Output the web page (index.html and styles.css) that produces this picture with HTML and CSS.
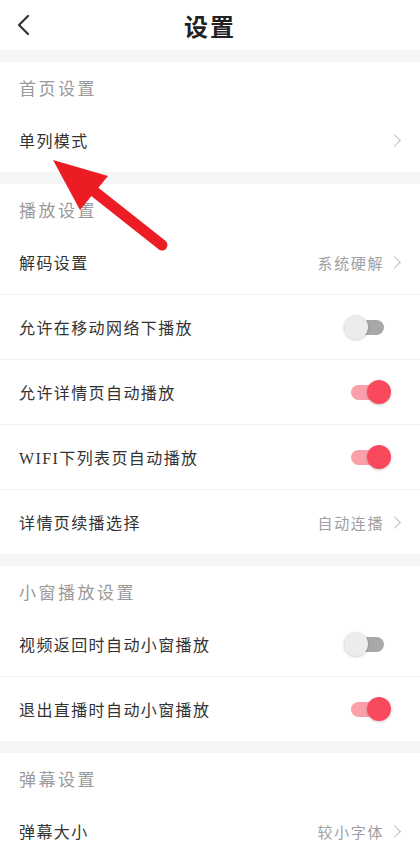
FILE: index.html
```html
<!DOCTYPE html>
<html lang="zh-CN">
<head>
    <meta charset="UTF-8">
    <meta name="viewport" content="width=device-width, initial-scale=1.0">
    <title>设置</title>
    <link rel="stylesheet" href="styles.css">
</head>
<body>
    <div class="page">
        <div class="topbar">
            <svg class="back" width="16" height="22" viewBox="0 0 16 22">
                <path d="M13 2 L4 11 L13 20" fill="none" stroke="#333" stroke-width="2.2" stroke-linecap="round" stroke-linejoin="round"/>
            </svg>
            <h1>设置</h1>
        </div>

        <div class="section">
            <div class="section-title">首页设置</div>
            <div class="row">
                <span class="label">单列模式</span>
                <span class="more"><span class="chev"></span></span>
            </div>
        </div>

        <div class="section">
            <div class="section-title">播放设置</div>
            <div class="row">
                <span class="label">解码设置</span>
                <span class="more">系统硬解<span class="chev"></span></span>
            </div>
            <div class="row">
                <span class="label">允许在移动网络下播放</span>
                <span class="switch"></span>
            </div>
            <div class="row">
                <span class="label">允许详情页自动播放</span>
                <span class="switch on"></span>
            </div>
            <div class="row">
                <span class="label">WIFI下列表页自动播放</span>
                <span class="switch on"></span>
            </div>
            <div class="row">
                <span class="label">详情页续播选择</span>
                <span class="more">自动连播<span class="chev"></span></span>
            </div>
        </div>

        <div class="section">
            <div class="section-title">小窗播放设置</div>
            <div class="row">
                <span class="label">视频返回时自动小窗播放</span>
                <span class="switch"></span>
            </div>
            <div class="row">
                <span class="label">退出直播时自动小窗播放</span>
                <span class="switch on"></span>
            </div>
        </div>

        <div class="section">
            <div class="section-title">弹幕设置</div>
            <div class="row">
                <span class="label">弹幕大小</span>
                <span class="more">较小字体<span class="chev"></span></span>
            </div>
        </div>

        <!-- arrow drawn over the page -->
        <svg class="arrow" width="420" height="860" viewBox="0 0 420 860">
            <line x1="162" y1="245" x2="95" y2="192" stroke="#ec1c24" stroke-width="11" stroke-linecap="round"/>
            <polygon points="53,160 108,176 80,210" fill="#ec1c24"/>
        </svg>
    </div>
</body>
</html>
```

FILE: styles.css
```css
body {
    margin: 0;
    background-color: #f5f5f5;
    font-family: "Liberation Serif", "Noto Sans CJK SC", sans-serif;
}
.page {
    position: relative;
    width: 420px;
    min-height: 860px;
    overflow: hidden;
}
.topbar {
    position: relative;
    height: 50px;
    background: #fff;
    display: flex;
    align-items: center;
    justify-content: center;
    margin-bottom: 12px;
}
.topbar h1 {
    margin: 0;
    font-family: "Noto Sans CJK SC", sans-serif;
    font-size: 24px;
    font-weight: bold;
    color: #222;
    letter-spacing: 2px;
}
.back {
    position: absolute;
    left: 15px;
    top: 14px;
}
.section {
    background: #fff;
    margin-bottom: 12px;
}
.section-title {
    height: 24px;
    line-height: 24px;
    padding: 16px 19px 5px;
    font-size: 17px;
    color: #9a9a9a;
    letter-spacing: 2.5px;
}
.row {
    display: flex;
    align-items: center;
    justify-content: space-between;
    height: 24px;
    padding: 21px 17px 20px 19px;
}
.row + .row {
    border-top: 1px solid #f1f1f1;
    padding-top: 20px;
}
.label {
    font-size: 16px;
    color: #333;
    letter-spacing: 1.4px;
}
.more {
    display: flex;
    align-items: center;
    font-size: 15px;
    color: #a0a0a0;
    letter-spacing: 1.6px;
}
.chev {
    display: inline-block;
    width: 8px;
    height: 8px;
    border-top: 1.5px solid #bbb;
    border-right: 1.5px solid #bbb;
    transform: rotate(45deg);
    margin-left: 6px;
    margin-right: 4px;
}
.switch {
    position: relative;
    width: 40px;
    height: 15px;
    border-radius: 8px;
    background: #a8a8a8;
    margin-right: 19px;
}
.switch::after {
    content: "";
    position: absolute;
    left: 0;
    top: -5px;
    width: 24px;
    height: 24px;
    border-radius: 50%;
    background: #ececec;
    box-shadow: 0 1px 3px rgba(0, 0, 0, 0.2);
}
.switch.on {
    width: 38px;
    background: #fba0aa;
    margin-right: 14px;
}
.switch.on::after {
    left: auto;
    right: -2px;
    background: #f84a5c;
}
.arrow {
    position: absolute;
    left: 0;
    top: 0;
    pointer-events: none;
}
```
